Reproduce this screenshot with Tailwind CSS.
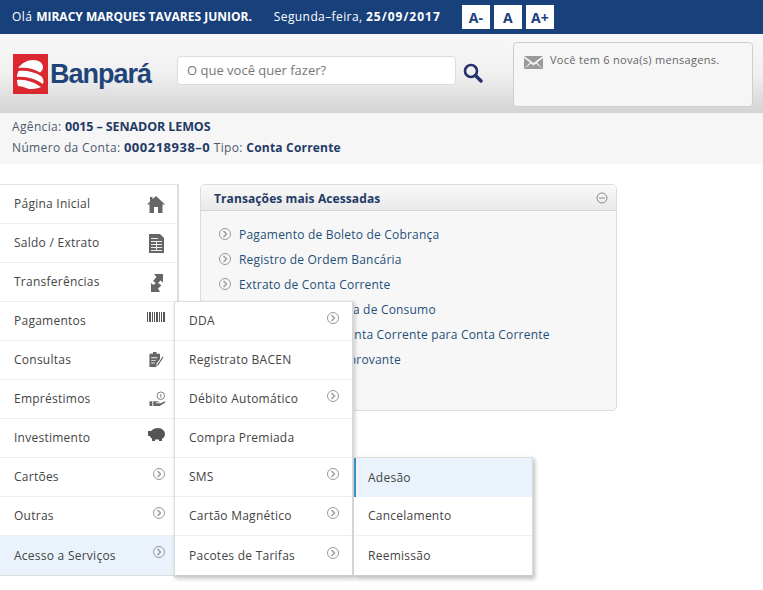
<!DOCTYPE html>
<html lang="pt-BR">
<head>
    <meta charset="UTF-8">
    <title>Banpará</title>
    <script src="https://cdn.jsdelivr.net/npm/@tailwindcss/browser@4"></script>
</head>
<body class="bg-white font-['Open_Sans',sans-serif] text-[12px] tracking-[0.25px] text-[#444] h-[590px] overflow-hidden">
    <!-- Top bar -->
    <div class="h-[34px] bg-[#18417c] flex items-center pl-[12px] text-white">
        <span class="tracking-[0.5px]">Olá <b class="font-bold tracking-[0px]">MIRACY MARQUES TAVARES JUNIOR.</b></span>
        <span class="ml-[22px] tracking-[0.4px]">Segunda–feira, <b class="font-bold tracking-[1px]">25/09/2017</b></span>
        <div class="flex gap-[4px] ml-[21px] text-[#18417c] font-bold text-[14px] tracking-[0px]">
            <span class="w-[28px] h-[24px] bg-white flex items-center justify-center">A-</span>
            <span class="w-[28px] h-[24px] bg-white flex items-center justify-center">A</span>
            <span class="w-[28px] h-[24px] bg-white flex items-center justify-center">A+</span>
        </div>
    </div>

    <!-- Header -->
    <div class="h-[79px] bg-gradient-to-b from-[#f8f8f8] via-[#f0f0f0] to-[#d4d4d4] flex pl-[13px]">
        <div class="flex items-center h-[40px] mt-[20px] w-[164px]">
            <svg width="35" height="40" viewBox="0 0 35 40" class="shrink-0">
                <rect width="35" height="40" fill="#d9282f"/>
                <path d="M5 14 C9 9 14 6 20 6 C26 6 30 9 30 13 C30 15 29 17 27 18.5 C21 14 12 13 5 14Z M4 23 C4 21 4.500 19 5.500 17 C13 16 22 18 28 22 C30.500 24 31 27 30 30 C23 25 13 22 4 23Z M4 26 C12 25 21 28 28 33 C25 34.500 21 35 16 35 C11 33 7 32 5 32 C4.500 30 4 28 4 26Z" fill="#fff"/>
            </svg>
            <span class="font-['Liberation_Sans',sans-serif] font-bold text-[#1f4479] text-[27px] tracking-[-1px] leading-none ml-[2px]">Banpará</span>
        </div>
        <div class="w-[279px] h-[29px] mt-[22px] bg-white border border-[#ddd] rounded-[4px] flex items-center pl-[9px] text-[13px] text-[#777] tracking-[0px]">O que você quer fazer?</div>
        <svg width="20" height="20" viewBox="0 0 20 20" class="mt-[29px] ml-[7px]" fill="none" stroke="#25306e">
            <circle cx="8" cy="8" r="6" stroke-width="2.6"/>
            <path d="M12.5 12.5 L18 18" stroke-width="3.4" stroke-linecap="round"/>
        </svg>
        <div class="w-[240px] h-[65px] mt-[8px] ml-[30px] bg-[#f6f6f6] border border-[#cfcfc8] rounded-[4px] flex items-start pl-[10px] pt-[9px] text-[#666] text-[11px] tracking-[0.3px]">
            <svg width="19" height="13" viewBox="0 0 19 13" class="mt-[4px] shrink-0">
                <path d="M0 0H19L9.500 7Z M0 2V13L6 6.500Z M19 2V13L13 6.500Z M0 13H19L12 7.500L9.500 9.500L7 7.500Z" fill="#9a9a9a"/>
            </svg>
            <span class="ml-[7px] leading-[16px]">Você tem 6 nova(s) mensagens.</span>
        </div>
    </div>

    <!-- Account info -->
    <div class="h-[51px] bg-[#f6f6f6] pl-[12px] pt-[3px] text-[#4b5a6c] text-[12px] leading-[21px] tracking-[0.35px]">
        <div>Agência: <b class="font-bold text-[#1f3a66] text-[12.5px] tracking-[-0.1px]">0015 – SENADOR LEMOS</b></div>
        <div>Número da Conta: <b class="font-bold text-[#1f3a66] text-[13px] tracking-[0.5px]">000218938–0</b> Tipo: <b class="font-bold text-[#1f3a66] text-[12px] tracking-[0.2px]">Conta Corrente</b></div>
    </div>

    <!-- Main -->
    <div class="relative flex mt-[20px] items-start">
        <ul class="w-[179px] border-t border-t-[#e2e2e2] border-b border-b-[#ddd] border-r-2 border-r-[#ddd] shrink-0">
            <li class="h-[39px] flex items-center justify-between pl-[14px] pr-[12px] border-b border-[#efefef]">
                <span>Página Inicial</span>
                <svg width="18" height="17" viewBox="0 0 18 17" fill="#666"><path d="M9 0 L18 8.500 L15.500 8.500 V17 H11 V11 H7 V17 H2.500 V8.500 H0 L3 5.600 V1 H5.500 V3.300Z"/></svg>
            </li>
            <li class="h-[39px] flex items-center justify-between pl-[14px] pr-[13px] border-b border-[#efefef]">
                <span>Saldo / Extrato</span>
                <svg width="15" height="19" viewBox="0 0 15 19"><path d="M0 0H11L15 4V19H0Z" fill="#666"/><path d="M2 4H9V5H2Z M2 7H13V8H2Z M2 10H13V11H2Z M2 13H13V14H2Z M2 16H13V17H2Z M7 7H8V17H7Z" fill="#eee"/></svg>
            </li>
            <li class="h-[39px] flex items-center justify-between pl-[14px] pr-[14px] border-b border-[#efefef]">
                <span>Transferências</span>
                <svg width="12" height="19" viewBox="0 0 12 19" fill="#666"><path d="M3 1 H12 V9.500 L9.500 7.500 L6 11 L2 8 L5.500 4Z M0 19 V10 L2.500 12 L6 9 L10.500 12.500 L7 15.500 L9 19Z"/></svg>
            </li>
            <li class="h-[39px] flex items-center justify-between pl-[14px] border-b border-[#efefef]">
                <span>Pagamentos</span>
            </li>
            <li class="h-[39px] flex items-center pl-[14px] border-b border-[#efefef]"><span>Consultas</span></li>
            <li class="h-[39px] flex items-center pl-[14px] border-b border-[#efefef]"><span>Empréstimos</span></li>
            <li class="h-[39px] flex items-center pl-[14px] border-b border-[#efefef]"><span>Investimento</span></li>
            <li class="h-[39px] flex items-center pl-[14px] border-b border-[#efefef]"><span>Cartões</span></li>
            <li class="h-[39px] flex items-center pl-[14px] border-b border-[#efefef]"><span>Outras</span></li>
            <li class="h-[39px] flex items-center pl-[14px] bg-[#eaf3fb]"><span>Acesso a Serviços</span></li>
        </ul>

        <!-- Transacoes panel -->
        <div class="w-[417px] h-[227px] ml-[21px] bg-[#f7f7f7] border border-[#dcdcdc] rounded-[5px] overflow-hidden">
            <div class="h-[26px] bg-gradient-to-b from-[#fafafa] to-[#e9e9e9] border-b border-[#d6d6d6] flex items-center justify-between pl-[13px] pr-[8px]">
                <span class="font-bold text-[#1f3a66] text-[12px] tracking-[0.1px] pt-[2px]">Transações mais Acessadas</span>
                <svg width="12" height="12" viewBox="0 0 12 12" fill="none" stroke="#888"><circle cx="6" cy="6" r="5"/><path d="M3 6H9"/></svg>
            </div>
            <ul class="pt-[11px] pl-[17px] text-[#1f4f78] tracking-[0.2px]">
                <li class="h-[25px] flex items-center gap-[7px]"><svg width="14" height="14" viewBox="0 0 14 14" fill="none" stroke="#999" class="-mt-[2px]"><circle cx="7" cy="7" r="5.500"/><path d="M5.500 4 L8.500 7 L5.500 10" stroke-width="1.400"/></svg>Pagamento de Boleto de Cobrança</li>
                <li class="h-[25px] flex items-center gap-[7px]"><svg width="14" height="14" viewBox="0 0 14 14" fill="none" stroke="#999" class="-mt-[2px]"><circle cx="7" cy="7" r="5.500"/><path d="M5.500 4 L8.500 7 L5.500 10" stroke-width="1.400"/></svg>Registro de Ordem Bancária</li>
                <li class="h-[25px] flex items-center gap-[7px]"><svg width="14" height="14" viewBox="0 0 14 14" fill="none" stroke="#999" class="-mt-[2px]"><circle cx="7" cy="7" r="5.500"/><path d="M5.500 4 L8.500 7 L5.500 10" stroke-width="1.400"/></svg>Extrato de Conta Corrente</li>
                <li class="h-[25px] flex items-center gap-[7px]"><svg width="14" height="14" viewBox="0 0 14 14" fill="none" stroke="#999" class="-mt-[2px]"><circle cx="7" cy="7" r="5.500"/><path d="M5.500 4 L8.500 7 L5.500 10" stroke-width="1.400"/></svg>Pagamento de Conta de Consumo</li>
                <li class="h-[25px] flex items-center gap-[7px]"><svg width="14" height="14" viewBox="0 0 14 14" fill="none" stroke="#999" class="-mt-[2px]"><circle cx="7" cy="7" r="5.500"/><path d="M5.500 4 L8.500 7 L5.500 10" stroke-width="1.400"/></svg>Transferência de Conta Corrente para Conta Corrente</li>
                <li class="h-[25px] flex items-center gap-[7px]"><svg width="14" height="14" viewBox="0 0 14 14" fill="none" stroke="#999" class="-mt-[2px]"><circle cx="7" cy="7" r="5.500"/><path d="M5.500 4 L8.500 7 L5.500 10" stroke-width="1.400"/></svg>Reemissão de Comprovante</li>
            </ul>
        </div>

        <!-- Icons of the first menu that sit over the rows -->
        <svg class="absolute left-[147px] top-[128px]" width="18" height="10" viewBox="0 0 18 10" fill="#555"><path d="M0 0h1v10H0z M2 0h2v10H2z M5 0h1v10H5z M7 0h1v10H7z M9 0h2v10H9z M12 0h1v10h-1z M14 0h1v10h-1z M16 0h2v10h-2z"/></svg>
        <svg class="absolute left-[149px] top-[168px]" width="15" height="15" viewBox="0 0 16 17"><path d="M0 2H4V0H8V2H12V8L8 13V17H0Z" fill="#666"/><path d="M2 6H9V7H2Z M2 9H7V10H2Z M2 12H6V13H2Z" fill="#eee"/><path d="M9 14 L15 5 L16 6 L10 15 L8.500 15.500Z" fill="#666"/></svg>
        <svg class="absolute left-[149px] top-[207px]" width="17" height="16" viewBox="0 0 17 17" fill="#666"><circle cx="12" cy="5" r="4" fill="none" stroke="#777"/><path d="M12 3V7" stroke="#777"/><path d="M0 11H3V16H0Z M4 11H9L11 12H7V13H12L16 11L17 12L11 16H4Z"/></svg>
        <svg class="absolute left-[148px] top-[244px]" width="17" height="13" viewBox="0 0 17 13" fill="#555"><path d="M0 3H3C5 1 7 0 10 0C14 0 17 3 17 6C17 9 15 10 14 11V13H11V11.500H7V13H4V10.500C3 10 2 9 2 8H0Z"/></svg>
        <svg class="absolute left-[152px] top-[283px]" width="14" height="14" viewBox="0 0 14 14" fill="none" stroke="#999"><circle cx="7" cy="7" r="5.500"/><path d="M5.500 4 L8.500 7 L5.500 10" stroke-width="1.400"/></svg>
        <svg class="absolute left-[152px] top-[322px]" width="14" height="14" viewBox="0 0 14 14" fill="none" stroke="#999"><circle cx="7" cy="7" r="5.500"/><path d="M5.500 4 L8.500 7 L5.500 10" stroke-width="1.400"/></svg>
        <svg class="absolute left-[152px] top-[361px]" width="14" height="14" viewBox="0 0 14 14" fill="none" stroke="#999"><circle cx="7" cy="7" r="5.500"/><path d="M5.500 4 L8.500 7 L5.500 10" stroke-width="1.400"/></svg>

        <!-- Submenu -->
        <ul class="absolute left-[174px] top-[117px] w-[180px] bg-white border-t border-[#ddd] border-l border-[#ddd] border-r-2 border-r-[#d8d8d8] border-b-2 border-b-[#ccc] shadow-[1px_2px_4px_rgba(0,0,0,0.2)]">
            <li class="h-[39px] flex items-center justify-between pl-[14px] pr-[12px] border-b border-[#efefef]"><span>DDA</span><svg width="14" height="14" viewBox="0 0 14 14" fill="none" stroke="#999" class="-mt-[6px]"><circle cx="7" cy="7" r="5.500"/><path d="M5.500 4 L8.500 7 L5.500 10" stroke-width="1.400"/></svg></li>
            <li class="h-[39px] flex items-center pl-[14px] border-b border-[#efefef]">Registrato BACEN</li>
            <li class="h-[39px] flex items-center justify-between pl-[14px] pr-[12px] border-b border-[#efefef]"><span>Débito Automático</span><svg width="14" height="14" viewBox="0 0 14 14" fill="none" stroke="#999" class="-mt-[6px]"><circle cx="7" cy="7" r="5.500"/><path d="M5.500 4 L8.500 7 L5.500 10" stroke-width="1.400"/></svg></li>
            <li class="h-[39px] flex items-center pl-[14px] border-b border-[#efefef]">Compra Premiada</li>
            <li class="h-[39px] flex items-center justify-between pl-[14px] pr-[12px] border-b border-[#efefef]"><span>SMS</span><svg width="14" height="14" viewBox="0 0 14 14" fill="none" stroke="#999" class="-mt-[6px]"><circle cx="7" cy="7" r="5.500"/><path d="M5.500 4 L8.500 7 L5.500 10" stroke-width="1.400"/></svg></li>
            <li class="h-[39px] flex items-center justify-between pl-[14px] pr-[12px] border-b border-[#efefef]"><span>Cartão Magnético</span><svg width="14" height="14" viewBox="0 0 14 14" fill="none" stroke="#999" class="-mt-[6px]"><circle cx="7" cy="7" r="5.500"/><path d="M5.500 4 L8.500 7 L5.500 10" stroke-width="1.400"/></svg></li>
            <li class="h-[39px] flex items-center justify-between pl-[14px] pr-[12px]"><span>Pacotes de Tarifas</span><svg width="14" height="14" viewBox="0 0 14 14" fill="none" stroke="#999" class="-mt-[6px]"><circle cx="7" cy="7" r="5.500"/><path d="M5.500 4 L8.500 7 L5.500 10" stroke-width="1.400"/></svg></li>
        </ul>

        <!-- Sub-submenu -->
        <ul class="absolute left-[354px] top-[273px] w-[179px] bg-white border-t border-[#ddd] border-b-2 border-b-[#ccc] border-r border-r-[#ddd] shadow-[2px_2px_4px_rgba(0,0,0,0.25)]">
            <li class="h-[39px] flex items-center pl-[12px] bg-[#eaf3fb] border-l-2 border-l-[#3a8fc0]">Adesão</li>
            <li class="h-[39px] flex items-center pl-[14px] border-b border-b-[#efefef]">Cancelamento</li>
            <li class="h-[39px] flex items-center pl-[14px]">Reemissão</li>
        </ul>
    </div>
</body>
</html>
